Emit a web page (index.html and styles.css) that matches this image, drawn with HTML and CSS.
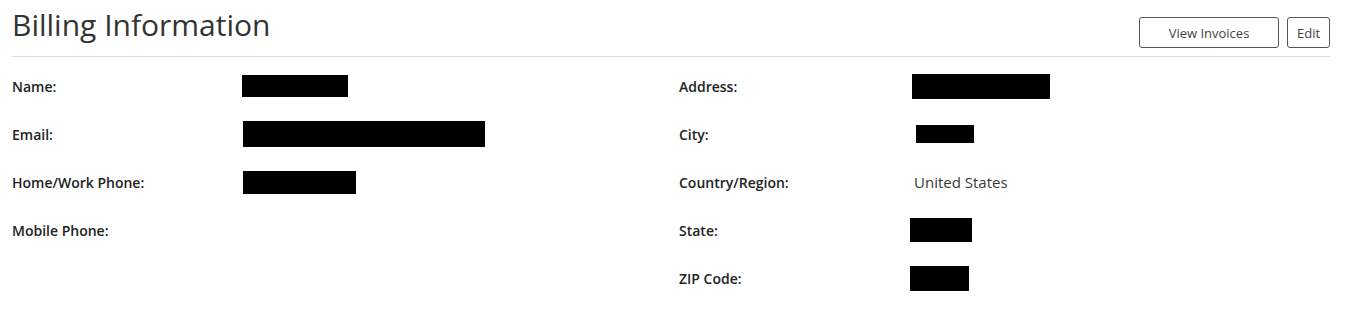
FILE: index.html
```html
<!DOCTYPE html>
<html lang="en">
<head>
<meta charset="utf-8">
<title>Billing Information</title>
<link rel="stylesheet" href="styles.css">
</head>
<body>
<div class="page">
  <header class="header">
    <h1 class="title">Billing Information</h1>
    <div class="actions">
      <button class="btn btn-invoices" type="button">View Invoices</button>
      <button class="btn btn-edit" type="button">Edit</button>
    </div>
  </header>
  <section class="details">
    <div class="col">
      <div class="field"><span class="label">Name:</span><span class="value"><span class="redact" style="width:106px;height:22px;margin-left:-1px"></span></span></div>
      <div class="field"><span class="label">Email:</span><span class="value"><span class="redact" style="width:242px;height:26px"></span></span></div>
      <div class="field"><span class="label">Home/Work Phone:</span><span class="value"><span class="redact" style="width:113px;height:23px"></span></span></div>
      <div class="field"><span class="label">Mobile Phone:</span><span class="value"></span></div>
    </div>
    <div class="col col-right">
      <div class="field"><span class="label">Address:</span><span class="value"><span class="redact" style="width:138px;height:25px"></span></span></div>
      <div class="field"><span class="label">City:</span><span class="value"><span class="redact" style="width:58px;height:18px;margin-left:4px"></span></span></div>
      <div class="field"><span class="label">Country/Region:</span><span class="value text">United States</span></div>
      <div class="field"><span class="label">State:</span><span class="value"><span class="redact" style="width:62px;height:24px;margin-left:-2px"></span></span></div>
      <div class="field"><span class="label">ZIP Code:</span><span class="value"><span class="redact" style="width:59px;height:25px;margin-left:-2px"></span></span></div>
    </div>
  </section>
</div>
</body>
</html>
```
FILE: styles.css
```css
html, body {
  margin: 0;
  padding: 0;
  background: #fff;
}

body {
  font-family: "Open Sans", "Noto Sans", sans-serif;
  color: #222;
}

.page {
  padding: 0 19px 0 12px;
}

.header {
  display: flex;
  justify-content: space-between;
  align-items: flex-start;
  height: 56px;
  border-bottom: 1px solid #dcdcdc;
}

.title {
  margin: 5px 0 0;
  font-size: 30px;
  line-height: 40px;
  font-weight: 400;
  color: #333;
}

.actions {
  display: flex;
  gap: 8px;
  margin-top: 17px;
}

.btn {
  height: 31px;
  padding: 0;
  background: #fff;
  border: 1px solid #555;
  border-radius: 3px;
  font-family: "Open Sans", "Noto Sans", sans-serif;
  font-size: 13px;
  color: #444;
}

.btn-invoices {
  width: 140px;
}

.btn-edit {
  width: 43px;
}

.details {
  display: grid;
  grid-template-columns: 667px 1fr;
  padding-top: 5px;
}

.field {
  display: grid;
  grid-template-columns: 231px 1fr;
  align-items: center;
  height: 48px;
}

.col-right .field {
  grid-template-columns: 233px 1fr;
}

.label {
  font-size: 14px;
  font-weight: 600;
  color: #222;
}

.value {
  display: flex;
  align-items: center;
  font-size: 14px;
  color: #333;
}

.value.text {
  padding-left: 2px;
  font-size: 15px;
  color: #3a3a3a;
}

.redact {
  display: block;
  background: #000;
}
```
